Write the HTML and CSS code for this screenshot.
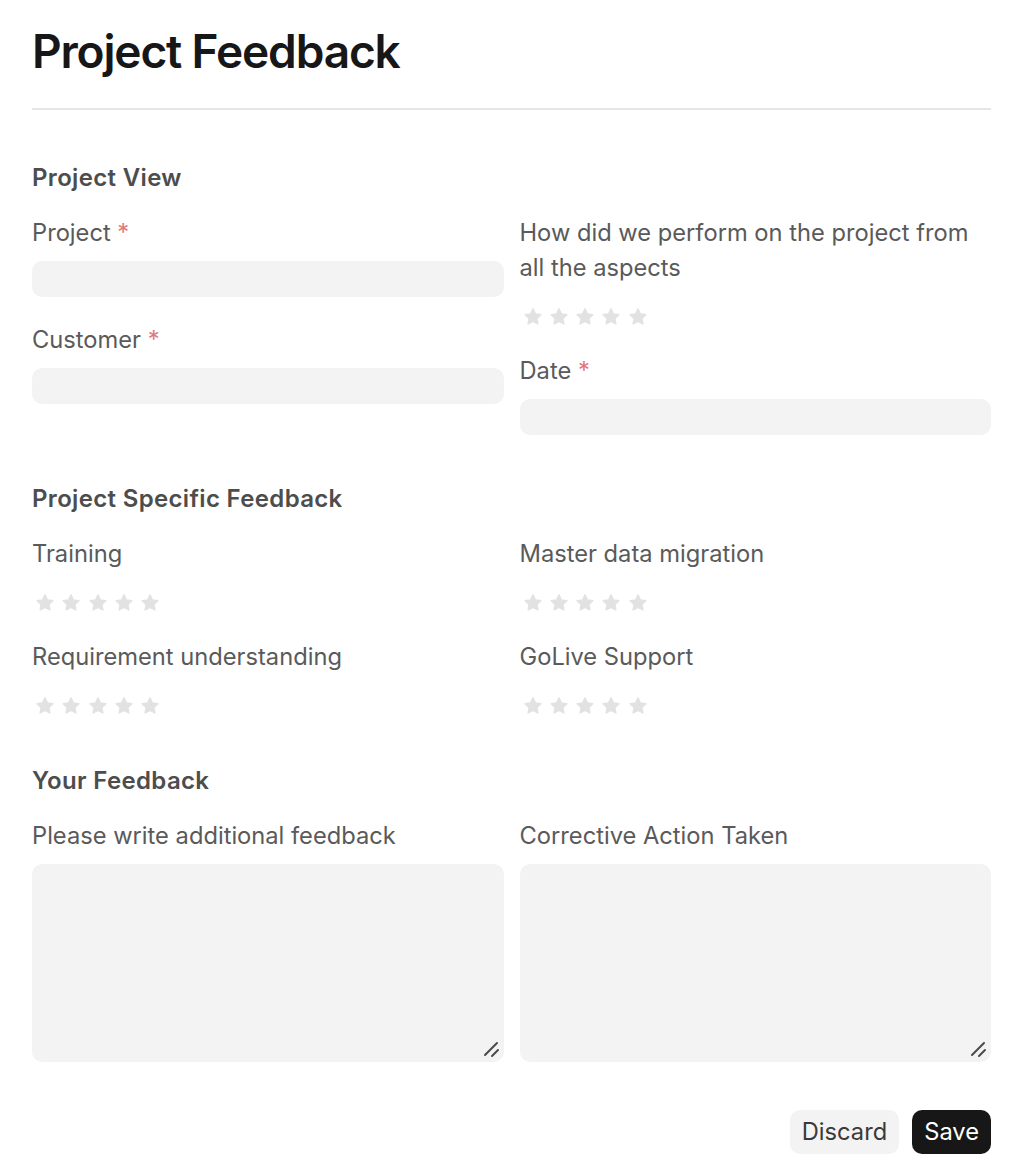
FILE: index.html
```html
<!DOCTYPE html>
<html>
<head>
<meta charset="utf-8">
<link rel="stylesheet" href="styles.css">
</head>
<body>
<div class="page">
  <h1 class="title">Project Feedback</h1>
  <div class="rule"></div>

  <section class="section first">
    <h2 class="section-title">Project View</h2>
    <div class="grid">
      <div class="col">
        <div class="field">
          <div class="label">Project <span class="req">*</span></div>
          <div class="input"></div>
        </div>
        <div class="field">
          <div class="label">Customer <span class="req">*</span></div>
          <div class="input"></div>
        </div>
      </div>
      <div class="col">
        <div class="field">
          <div class="label">How did we perform on the project from all the aspects</div>
          <div class="stars">
            <svg viewBox="0 0 24 24"><path d="M12 3.2l2.6 5.5 6 .8-4.4 4.2 1.1 5.9L12 16.8l-5.3 2.8 1.1-5.9-4.4-4.2 6-.8z"/></svg>
            <svg viewBox="0 0 24 24"><path d="M12 3.2l2.6 5.5 6 .8-4.4 4.2 1.1 5.9L12 16.8l-5.3 2.8 1.1-5.9-4.4-4.2 6-.8z"/></svg>
            <svg viewBox="0 0 24 24"><path d="M12 3.2l2.6 5.5 6 .8-4.4 4.2 1.1 5.9L12 16.8l-5.3 2.8 1.1-5.9-4.4-4.2 6-.8z"/></svg>
            <svg viewBox="0 0 24 24"><path d="M12 3.2l2.6 5.5 6 .8-4.4 4.2 1.1 5.9L12 16.8l-5.3 2.8 1.1-5.9-4.4-4.2 6-.8z"/></svg>
            <svg viewBox="0 0 24 24"><path d="M12 3.2l2.6 5.5 6 .8-4.4 4.2 1.1 5.9L12 16.8l-5.3 2.8 1.1-5.9-4.4-4.2 6-.8z"/></svg>
          </div>
        </div>
        <div class="field">
          <div class="label">Date <span class="req">*</span></div>
          <div class="input"></div>
        </div>
      </div>
    </div>
  </section>

  <section class="section">
    <h2 class="section-title">Project Specific Feedback</h2>
    <div class="grid">
      <div class="col col-ratings">
        <div class="field">
          <div class="label">Training</div>
          <div class="stars">
            <svg viewBox="0 0 24 24"><path d="M12 3.2l2.6 5.5 6 .8-4.4 4.2 1.1 5.9L12 16.8l-5.3 2.8 1.1-5.9-4.4-4.2 6-.8z"/></svg>
            <svg viewBox="0 0 24 24"><path d="M12 3.2l2.6 5.5 6 .8-4.4 4.2 1.1 5.9L12 16.8l-5.3 2.8 1.1-5.9-4.4-4.2 6-.8z"/></svg>
            <svg viewBox="0 0 24 24"><path d="M12 3.2l2.6 5.5 6 .8-4.4 4.2 1.1 5.9L12 16.8l-5.3 2.8 1.1-5.9-4.4-4.2 6-.8z"/></svg>
            <svg viewBox="0 0 24 24"><path d="M12 3.2l2.6 5.5 6 .8-4.4 4.2 1.1 5.9L12 16.8l-5.3 2.8 1.1-5.9-4.4-4.2 6-.8z"/></svg>
            <svg viewBox="0 0 24 24"><path d="M12 3.2l2.6 5.5 6 .8-4.4 4.2 1.1 5.9L12 16.8l-5.3 2.8 1.1-5.9-4.4-4.2 6-.8z"/></svg>
          </div>
        </div>
        <div class="field">
          <div class="label">Requirement understanding</div>
          <div class="stars">
            <svg viewBox="0 0 24 24"><path d="M12 3.2l2.6 5.5 6 .8-4.4 4.2 1.1 5.9L12 16.8l-5.3 2.8 1.1-5.9-4.4-4.2 6-.8z"/></svg>
            <svg viewBox="0 0 24 24"><path d="M12 3.2l2.6 5.5 6 .8-4.4 4.2 1.1 5.9L12 16.8l-5.3 2.8 1.1-5.9-4.4-4.2 6-.8z"/></svg>
            <svg viewBox="0 0 24 24"><path d="M12 3.2l2.6 5.5 6 .8-4.4 4.2 1.1 5.9L12 16.8l-5.3 2.8 1.1-5.9-4.4-4.2 6-.8z"/></svg>
            <svg viewBox="0 0 24 24"><path d="M12 3.2l2.6 5.5 6 .8-4.4 4.2 1.1 5.9L12 16.8l-5.3 2.8 1.1-5.9-4.4-4.2 6-.8z"/></svg>
            <svg viewBox="0 0 24 24"><path d="M12 3.2l2.6 5.5 6 .8-4.4 4.2 1.1 5.9L12 16.8l-5.3 2.8 1.1-5.9-4.4-4.2 6-.8z"/></svg>
          </div>
        </div>
      </div>
      <div class="col col-ratings">
        <div class="field">
          <div class="label">Master data migration</div>
          <div class="stars">
            <svg viewBox="0 0 24 24"><path d="M12 3.2l2.6 5.5 6 .8-4.4 4.2 1.1 5.9L12 16.8l-5.3 2.8 1.1-5.9-4.4-4.2 6-.8z"/></svg>
            <svg viewBox="0 0 24 24"><path d="M12 3.2l2.6 5.5 6 .8-4.4 4.2 1.1 5.9L12 16.8l-5.3 2.8 1.1-5.9-4.4-4.2 6-.8z"/></svg>
            <svg viewBox="0 0 24 24"><path d="M12 3.2l2.6 5.5 6 .8-4.4 4.2 1.1 5.9L12 16.8l-5.3 2.8 1.1-5.9-4.4-4.2 6-.8z"/></svg>
            <svg viewBox="0 0 24 24"><path d="M12 3.2l2.6 5.5 6 .8-4.4 4.2 1.1 5.9L12 16.8l-5.3 2.8 1.1-5.9-4.4-4.2 6-.8z"/></svg>
            <svg viewBox="0 0 24 24"><path d="M12 3.2l2.6 5.5 6 .8-4.4 4.2 1.1 5.9L12 16.8l-5.3 2.8 1.1-5.9-4.4-4.2 6-.8z"/></svg>
          </div>
        </div>
        <div class="field">
          <div class="label">GoLive Support</div>
          <div class="stars">
            <svg viewBox="0 0 24 24"><path d="M12 3.2l2.6 5.5 6 .8-4.4 4.2 1.1 5.9L12 16.8l-5.3 2.8 1.1-5.9-4.4-4.2 6-.8z"/></svg>
            <svg viewBox="0 0 24 24"><path d="M12 3.2l2.6 5.5 6 .8-4.4 4.2 1.1 5.9L12 16.8l-5.3 2.8 1.1-5.9-4.4-4.2 6-.8z"/></svg>
            <svg viewBox="0 0 24 24"><path d="M12 3.2l2.6 5.5 6 .8-4.4 4.2 1.1 5.9L12 16.8l-5.3 2.8 1.1-5.9-4.4-4.2 6-.8z"/></svg>
            <svg viewBox="0 0 24 24"><path d="M12 3.2l2.6 5.5 6 .8-4.4 4.2 1.1 5.9L12 16.8l-5.3 2.8 1.1-5.9-4.4-4.2 6-.8z"/></svg>
            <svg viewBox="0 0 24 24"><path d="M12 3.2l2.6 5.5 6 .8-4.4 4.2 1.1 5.9L12 16.8l-5.3 2.8 1.1-5.9-4.4-4.2 6-.8z"/></svg>
          </div>
        </div>
      </div>
    </div>
  </section>

  <section class="section">
    <h2 class="section-title">Your Feedback</h2>
    <div class="grid">
      <div class="field">
        <div class="label">Please write additional feedback</div>
        <div class="textarea">
          <svg class="grip" viewBox="0 0 20 20"><path d="M16 4L4 16M17 11l-6 6"/></svg>
        </div>
      </div>
      <div class="field">
        <div class="label">Corrective Action Taken</div>
        <div class="textarea">
          <svg class="grip" viewBox="0 0 20 20"><path d="M16 4L4 16M17 11l-6 6"/></svg>
        </div>
      </div>
    </div>
  </section>

  <div class="actions">
    <button class="btn btn-secondary">Discard</button>
    <button class="btn btn-primary">Save</button>
  </div>
</div>
</body>
</html>
```

FILE: styles.css
```css
* { box-sizing: border-box; }

html, body {
  margin: 0;
  padding: 0;
  background: #ffffff;
}

body {
  font-family: Inter, "Noto Sans", "Liberation Sans", sans-serif;
  color: #171717;
}

.page {
  padding: 22px 27px 0 32px;
}

.title {
  margin: 0;
  font-size: 46px;
  line-height: 58px;
  font-weight: 600;
  letter-spacing: -0.025em;
  color: #171717;
}

.rule {
  height: 2px;
  background: #e6e6e6;
  margin-top: 28px;
}

.section {
  margin-top: 49px;
}

.section.first {
  margin-top: 53px;
}

.section-title {
  margin: 0 0 22px 0;
  font-size: 24px;
  line-height: 30px;
  font-weight: 600;
  letter-spacing: 0.014em;
  color: #4d4d4d;
}

.grid {
  display: grid;
  grid-template-columns: 1fr 1fr;
  column-gap: 16px;
}

.col {
  display: flex;
  flex-direction: column;
  gap: 25px;
}

.col-ratings {
  gap: 25px;
}

.field {
  display: flex;
  flex-direction: column;
  gap: 11px;
}

.label {
  font-size: 23.7px;
  line-height: 35px;
  color: #5a5a5a;
}

.req {
  color: #e0787a;
}

.input {
  height: 36px;
  border-radius: 10px;
  background: #f3f3f3;
}

.stars {
  display: flex;
  gap: 4.3px;
  padding: 10px 0 0 2px;
}

.stars svg {
  width: 22px;
  height: 22px;
  fill: #e2e2e2;
  stroke: #e2e2e2;
  stroke-width: 1.6;
  stroke-linejoin: round;
}

.textarea {
  position: relative;
  height: 198px;
  border-radius: 10px;
  background: #f3f3f3;
}

.grip {
  position: absolute;
  right: 3px;
  bottom: 3px;
  width: 20px;
  height: 20px;
  fill: none;
  stroke: #4a4a4a;
  stroke-width: 2;
  stroke-linecap: round;
}

.actions {
  display: flex;
  justify-content: flex-end;
  gap: 13px;
  margin-top: 48px;
}

.btn {
  font-family: inherit;
  font-size: 23.7px;
  line-height: 28px;
  height: 44px;
  border: none;
  border-radius: 10px;
  padding: 0 12px;
}

.btn-secondary {
  background: #f3f3f3;
  color: #3a3a3a;
}

.btn-primary {
  background: #171717;
  color: #ffffff;
}
```
